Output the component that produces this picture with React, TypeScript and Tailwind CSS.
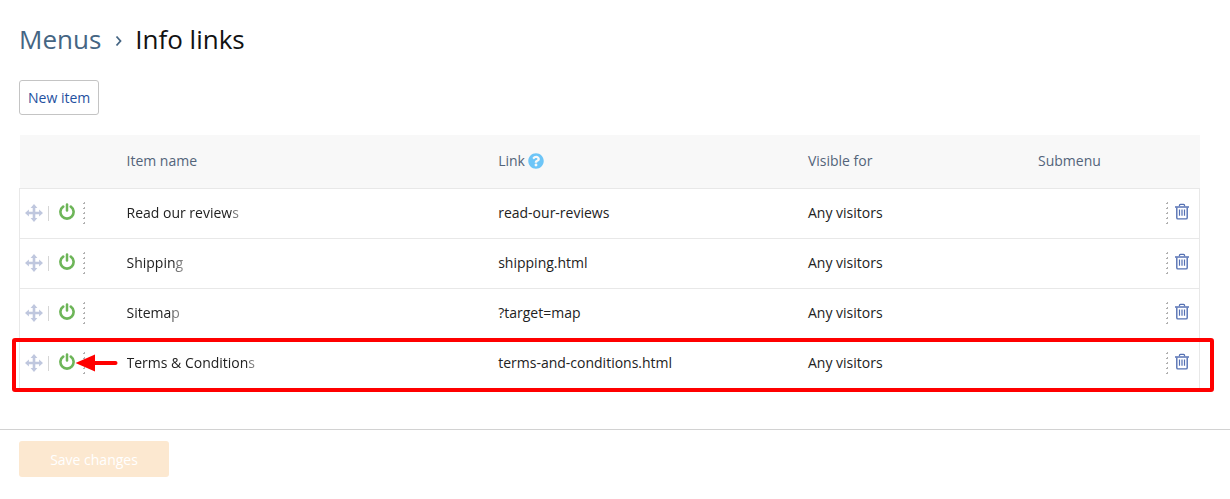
import React from "react";
import { FaQuestionCircle } from "react-icons/fa";

type MenuItem = { name: string; link: string; visibleFor: string; highlighted?: boolean };

const items: MenuItem[] = [
  { name: "Read our reviews", link: "read-our-reviews", visibleFor: "Any visitors" },
  { name: "Shipping", link: "shipping.html", visibleFor: "Any visitors" },
  { name: "Sitemap", link: "?target=map", visibleFor: "Any visitors" },
  { name: "Terms & Conditions", link: "terms-and-conditions.html", visibleFor: "Any visitors", highlighted: true },
];

function MoveIcon() {
  return (
    <svg width="18" height="18" viewBox="0 0 18 18" fill="none" aria-hidden="true">
      <path d="M9 2.5v13M2.5 9h13" stroke="#bfc7de" strokeWidth="2.6" />
      <path
        d="M9 0l3.4 3.9h-6.8zM9 18l3.4-3.9h-6.8zM0 9l3.9-3.4v6.8zM18 9l-3.9-3.4v6.8z"
        fill="#bfc7de"
      />
    </svg>
  );
}

function PowerIcon() {
  return (
    <svg width="16" height="17" viewBox="0 0 16 17" fill="none" stroke="#6db558" strokeLinecap="round" aria-hidden="true">
      <path d="M4.2 3.6a6.6 6.6 0 1 0 7.6 0" strokeWidth="2.6" />
      <path d="M8 1.5v6" strokeWidth="2.5" />
    </svg>
  );
}

function TrashIcon() {
  return (
    <svg width="14" height="17" viewBox="0 0 14 17" fill="none" aria-hidden="true">
      <path d="M4.5 3.5V2.2q0-.9.9-.9h3.2q.9 0 .9.9v1.3" stroke="#5470b3" strokeWidth="1.3" />
      <path d="M0 4h14" stroke="#7389c1" strokeWidth="1.8" />
      <path d="M1.8 4.5v10.2q0 1.2 1.2 1.2h8q1.2 0 1.2-1.2V4.5" stroke="#5470b3" strokeWidth="1.4" />
      <path d="M4.5 6.5v6.3M7 6.5v6.3M9.5 6.5v6.3" stroke="#5470b3" strokeWidth="1.2" />
    </svg>
  );
}

function DottedDivider() {
  return (
    <svg width="2" height="22" viewBox="0 0 2 22" aria-hidden="true">
      <path d="M1 0h1v2h-1zM1 5h1v2h-1zM1 10h1v2h-1zM1 15h1v2h-1zM1 20h1v2h-1z" fill="#b0b0b0" />
      <path d="M0 1h1v1h-1zM0 6h1v1h-1zM0 11h1v1h-1zM0 16h1v1h-1zM0 21h1v1h-1z" fill="#b0b0b0" />
    </svg>
  );
}

function Highlight() {
  return (
    <>
      <span className="pointer-events-none absolute -top-px -right-[15px] -bottom-[5px] -left-[9px] rounded-[3px] border-4 border-[#ff0000]" />
      <svg className="pointer-events-none absolute top-[15px] left-[54px]" width="44" height="18" viewBox="0 0 44 18" aria-hidden="true">
        <path d="M0.5 9L20 0.5v17z" fill="#ff0000" />
        <path d="M18 9h22.5" stroke="#ff0000" strokeWidth="4" strokeLinecap="round" />
      </svg>
    </>
  );
}

function ItemRow({ item }: { item: MenuItem }) {
  return (
    <tr className="relative h-[50px] border border-[#e8e8e8]">
      <td>
        <div className="flex items-center pl-[5px]">
          <button type="button" aria-label={`Move ${item.name}`} className="block cursor-move">
            <MoveIcon />
          </button>
          <span className="ml-[5px] h-[15px] w-px bg-[#d6d6d6]" />
          <button type="button" aria-label={`Disable ${item.name}`} className="ml-[10px] block pb-[3px]">
            <PowerIcon />
          </button>
          <span className="ml-2">
            <DottedDivider />
          </span>
        </div>
        {item.highlighted && <Highlight />}
      </td>
      <td>
        <span className="inline-block [mask-image:linear-gradient(to_right,#000_calc(100%_-_8px),rgba(0,0,0,0.65)_calc(100%_-_7px),rgba(0,0,0,0.55))]">
          {item.name}
        </span>
      </td>
      <td>{item.link}</td>
      <td>{item.visibleFor}</td>
      <td />
      <td>
        <div className="flex items-center justify-end gap-[7px] pr-[10px]">
          <DottedDivider />
          <button type="button" aria-label={`Delete ${item.name}`} className="block pb-[3px]">
            <TrashIcon />
          </button>
        </div>
      </td>
    </tr>
  );
}

export default function App() {
  return (
    <div className="bg-white font-['Open_Sans',sans-serif] text-sm text-[#222]">
      <main className="pt-[21px] pr-[30px] pl-[19px]">
        <h1 className="flex items-center text-[26px] leading-9 text-[#121212]">
          <a href="#menus" className="text-[#456583]">Menus</a>
          <span className="mr-3 ml-[14px] text-[#456583]">
            <svg width="8" height="12" viewBox="0 0 8 12" fill="none" className="mt-1" aria-hidden="true">
              <path d="M1.5 1.5L5.5 6l-4 4.5" stroke="currentColor" strokeWidth="1.8" />
            </svg>
          </span>
          Info links
        </h1>
        <button type="button" className="mt-[23px] block h-[35px] rounded-[3px] border border-[#c4c4c4] px-2 text-[#1f51a0]">
          New item
        </button>

        <table className="mt-5 w-full table-fixed border-collapse text-left">
          <colgroup>
            <col className="w-[107px]" />
            <col className="w-[31.5%]" />
            <col className="w-[26.25%]" />
            <col className="w-[19.5%]" />
            <col />
            <col className="w-[60px]" />
          </colgroup>
          <thead>
            <tr className="h-[53px] bg-[#f8f8f8] text-[#53647a] [&>th]:font-medium">
              <th aria-label="Actions" />
              <th>Item name</th>
              <th>
                <div className="flex items-center gap-[3px]">
                  Link
                  <button type="button" aria-label="Link help" className="block pb-px">
                    <FaQuestionCircle size={16} color="#6dc5f7" />
                  </button>
                </div>
              </th>
              <th>Visible for</th>
              <th>Submenu</th>
              <th aria-label="Delete" />
            </tr>
          </thead>
          <tbody>
            {items.map((item) => (
              <ItemRow key={item.link} item={item} />
            ))}
          </tbody>
        </table>
      </main>

      <footer className="mt-10 border-t border-[#d2d2d2] pt-[11px] pr-[30px] pb-[22px] pl-[19px]">
        <button type="button" disabled className="block h-9 w-[150px] rounded-[3px] bg-[#fce8d0] pt-0.5 font-medium text-white">
          Save changes
        </button>
      </footer>
    </div>
  );
}
